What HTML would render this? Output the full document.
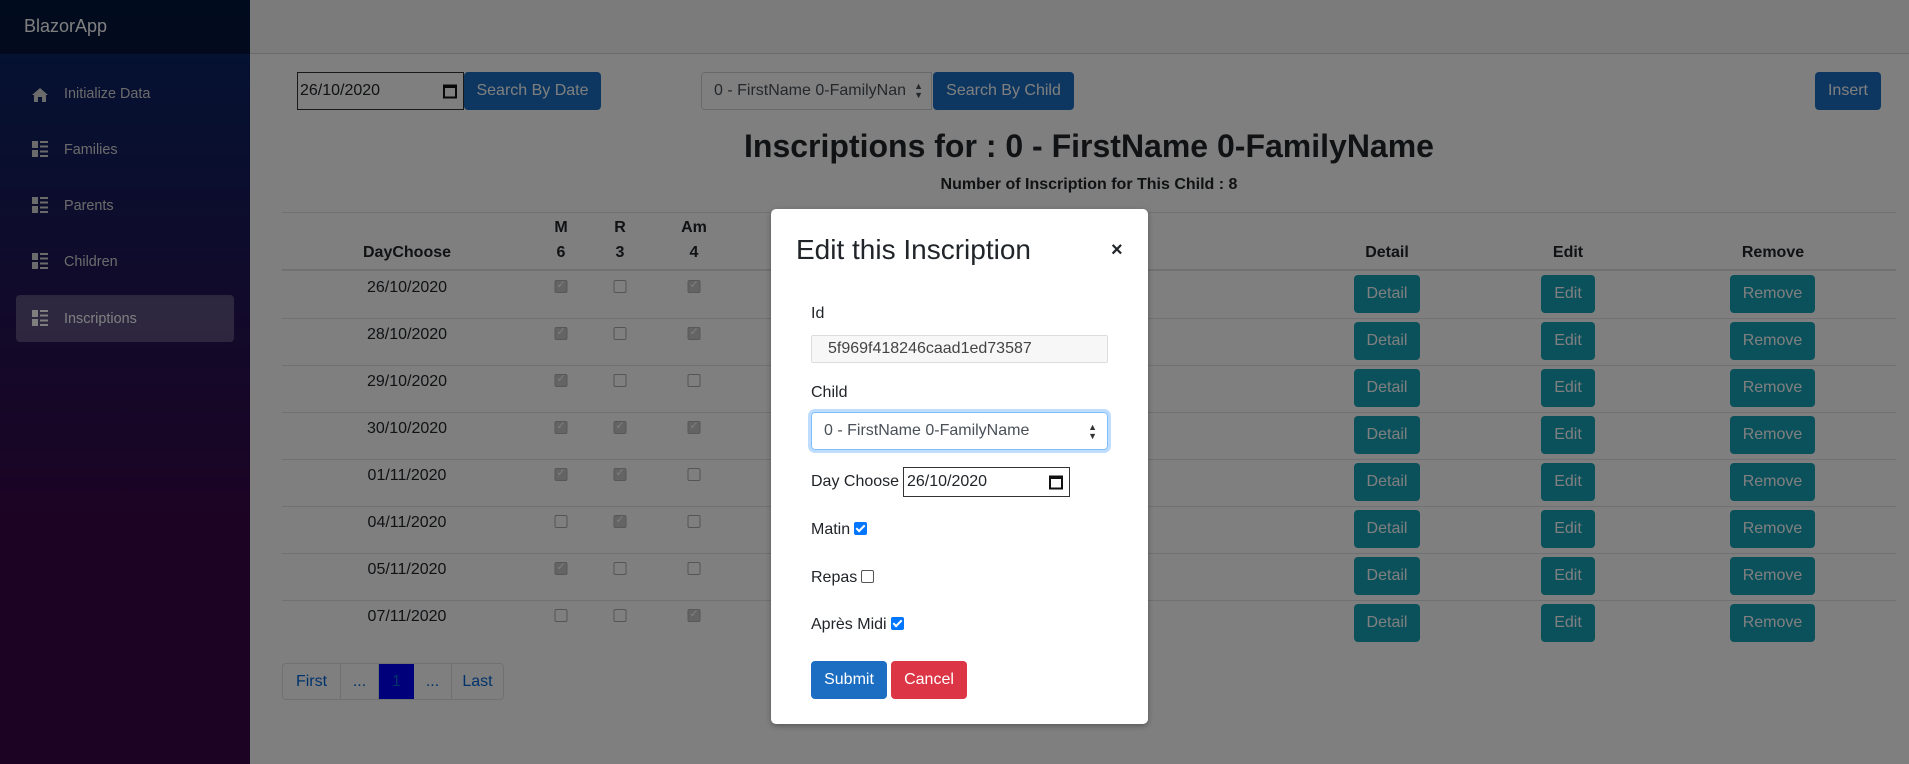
<!DOCTYPE html>
<html><head><meta charset="utf-8"><style>
*{box-sizing:border-box;margin:0;padding:0}
body{width:1909px;height:764px;overflow:hidden;position:relative;font-family:"Liberation Sans",Arial,sans-serif;font-size:16px;color:#212529;background:#fff}
.a{position:absolute}
#side{left:0;top:0;width:250px;height:764px;background:linear-gradient(180deg,rgb(5,39,103) 0%,#3a0647 70%)}
#side .hd{height:54px;background:rgba(0,0,0,.4);color:#fff;font-size:18px;padding:16px 0 0 24px}
.nav{position:absolute;left:16px;width:218px;height:47px;color:#d7d7d7;font-size:14.4px;padding:16px 0 0 48px;border-radius:4px}
.nav.act{background:rgba(255,255,255,.25);color:#fff}
.ic{position:absolute;left:16px;top:15px}
.btn{position:absolute;border-radius:4px;color:#fff;font-size:16px;text-align:center;line-height:38px;height:38px}
.bp{background:#1b6ec2}
.bi{background:#17a2b8}
.c{position:absolute;text-align:center;transform:translateX(-50%);white-space:nowrap}
.b{font-weight:bold}
.cb{position:absolute;width:13px;height:13px;border:1px solid #aaa;border-radius:2px;background:#fff;transform:translateX(-50%)}
.cb.on{background:#c8c8c8;border-color:#b0b0b0}
.cb.on:after{content:"✓";position:absolute;left:1px;top:-3px;font-size:11px;color:#fff}
.hl{position:absolute;left:282px;width:1614px;height:1px;background:#dee2e6}
#ov{left:0;top:0;width:1909px;height:764px;background:rgba(0,0,0,.5)}
#modal{left:771px;top:209px;width:377px;height:515px;background:#fff;border-radius:5px;box-shadow:0 2px 6px rgba(0,0,0,.3)}
.lbl{position:absolute;left:40px;font-size:16px;color:#212529}
.chk{display:inline-block;width:13px;height:13px;border-radius:2px;vertical-align:-1px;margin-left:4px}
.chk.on{background:#0075ff;position:relative}
.chk.on:after{content:"";position:absolute;left:4px;top:1px;width:3px;height:7px;border:solid #fff;border-width:0 2px 2px 0;transform:rotate(45deg)}
.chk.off{border:1px solid #555;background:#fff}
</style></head><body>
<div id="side" class="a">
<div class="hd">BlazorApp</div>
<div class="nav" style="top:70px"><svg class="ic" width="16" height="16" viewBox="0 0 16 16" style="top:17px"><path d="M8 1L0 8h2v7h4v-5h4v5h4V8h2z" fill="#d7d7d7"/></svg>Initialize Data</div>
<div class="nav" style="top:126px"><svg class="ic" width="16" height="16" viewBox="0 0 16 16" fill="#d7d7d7"><rect x="0" y="0" width="6" height="7"/><rect x="0" y="9" width="6" height="7"/><rect x="8" y="0" width="8" height="2"/><rect x="8" y="4.5" width="8" height="2"/><rect x="8" y="9.5" width="8" height="2"/><rect x="8" y="14" width="8" height="2"/></svg>Families</div>
<div class="nav" style="top:182px"><svg class="ic" width="16" height="16" viewBox="0 0 16 16" fill="#d7d7d7"><rect x="0" y="0" width="6" height="7"/><rect x="0" y="9" width="6" height="7"/><rect x="8" y="0" width="8" height="2"/><rect x="8" y="4.5" width="8" height="2"/><rect x="8" y="9.5" width="8" height="2"/><rect x="8" y="14" width="8" height="2"/></svg>Parents</div>
<div class="nav" style="top:238px"><svg class="ic" width="16" height="16" viewBox="0 0 16 16" fill="#d7d7d7"><rect x="0" y="0" width="6" height="7"/><rect x="0" y="9" width="6" height="7"/><rect x="8" y="0" width="8" height="2"/><rect x="8" y="4.5" width="8" height="2"/><rect x="8" y="9.5" width="8" height="2"/><rect x="8" y="14" width="8" height="2"/></svg>Children</div>
<div class="nav act" style="top:295px"><svg class="ic" width="16" height="16" viewBox="0 0 16 16" fill="#fff"><rect x="0" y="0" width="6" height="7"/><rect x="0" y="9" width="6" height="7"/><rect x="8" y="0" width="8" height="2"/><rect x="8" y="4.5" width="8" height="2"/><rect x="8" y="9.5" width="8" height="2"/><rect x="8" y="14" width="8" height="2"/></svg>Inscriptions</div>
</div>
<div class="a" style="left:250px;top:0;width:1659px;height:54px;background:#f7f7f7;border-bottom:1px solid #d6d5d5"></div>

<div class="a" style="left:297px;top:72px;width:167px;height:38px;border:1px solid #333;padding:9px 2px;font-size:16px">26/10/2020
<svg class="a" style="right:6px;top:10px" width="14" height="16" viewBox="0 0 14 16"><rect x="1" y="2.5" width="12" height="12" fill="none" stroke="#111" stroke-width="2"/><rect x="1" y="2" width="12" height="3" fill="#111"/></svg></div>
<div class="btn bp" style="left:464px;top:72px;width:137px">Search By Date</div>
<div class="a" style="left:701px;top:72px;width:231px;height:38px;border:1px solid #ced4da;border-radius:4px 0 0 4px;padding:9px 12px;color:#495057;white-space:nowrap;overflow:hidden">0 - FirstName 0-FamilyNan<span class="a" style="right:8px;top:9px;font-size:9px;line-height:9px">▲<br>▼</span></div>
<div class="btn bp" style="left:933px;top:72px;width:141px">Search By Child</div>
<div class="btn bp" style="left:1815px;top:72px;width:66px">Insert</div>

<div class="c b" style="left:1089px;top:128px;font-size:32px">Inscriptions for : 0 - FirstName 0-FamilyName</div>
<div class="c b" style="left:1089px;top:176px;font-size:16px">Number of Inscription for This Child : 8</div>

<div class="hl" style="top:212px"></div>
<div class="c b" style="left:561px;top:219px">M</div>
<div class="c b" style="left:620px;top:219px">R</div>
<div class="c b" style="left:694px;top:219px">Am</div>
<div class="c b" style="left:407px;top:244px">DayChoose</div>
<div class="c b" style="left:561px;top:244px">6</div>
<div class="c b" style="left:620px;top:244px">3</div>
<div class="c b" style="left:694px;top:244px">4</div>
<div class="c b" style="left:1387px;top:244px">Detail</div>
<div class="c b" style="left:1568px;top:244px">Edit</div>
<div class="c b" style="left:1773px;top:244px">Remove</div>
<div class="hl" style="top:269px;height:2px"></div>

<div id="rows"></div>
<script>
var d=["26/10/2020","28/10/2020","29/10/2020","30/10/2020","01/11/2020","04/11/2020","05/11/2020","07/11/2020"];
var s=[[1,0,1],[1,0,1],[1,0,0],[1,1,1],[1,1,0],[0,1,0],[1,0,0],[0,0,1]];
var h="",x=[561,620,694];
for(var i=0;i<8;i++){var t=271+i*47;
h+='<div class="c" style="left:407px;top:'+(t+8)+'px">'+d[i]+'</div>';
for(var j=0;j<3;j++)h+='<div class="cb'+(s[i][j]?' on':'')+'" style="left:'+x[j]+'px;top:'+(t+9)+'px"></div>';
h+='<div class="btn bi" style="left:1354px;top:'+(t+4)+'px;width:66px">Detail</div>';
h+='<div class="btn bi" style="left:1541px;top:'+(t+4)+'px;width:54px">Edit</div>';
h+='<div class="btn bi" style="left:1730px;top:'+(t+4)+'px;width:85px">Remove</div>';
if(i<7)h+='<div class="hl" style="top:'+(t+47)+'px"></div>';}
document.getElementById("rows").innerHTML=h;
</script>

<div class="a" style="left:282px;top:663px;height:37px;width:222px;border:1px solid #dee2e6;border-radius:4px;color:#0366d6;font-size:16px;line-height:35px;display:flex">
<div style="width:58px;text-align:center;border-right:1px solid #dee2e6">First</div>
<div style="width:38px;text-align:center;border-right:1px solid #dee2e6">...</div>
<div style="width:35px;text-align:center;background:#0000f6">1</div>
<div style="width:38px;text-align:center;border-right:1px solid #dee2e6">...</div>
<div style="flex:1;text-align:center">Last</div>
</div>

<div id="ov" class="a"></div>
<div id="modal" class="a">
<div class="a" style="left:25px;top:25px;font-size:28px">Edit this Inscription</div>
<div class="a b" style="left:340px;top:30px;font-size:20px">×</div>
<div class="lbl" style="top:96px">Id</div>
<div class="a" style="left:40px;top:126px;width:297px;height:28px;background:#f7f7f7;border:1px solid #ddd;border-radius:2px;padding:4px 16px;color:#444">5f969f418246caad1ed73587</div>
<div class="lbl" style="top:175px">Child</div>
<div class="a" style="left:40px;top:203px;width:297px;height:38px;border:1px solid #80bdff;border-radius:4px;box-shadow:0 0 0 3px rgba(0,123,255,.25);padding:9px 12px;color:#495057">0 - FirstName 0-FamilyName<span class="a" style="right:10px;top:10px;font-size:9px;line-height:9px;color:#333">▲<br>▼</span></div>
<div class="lbl" style="top:264px">Day Choose</div>
<div class="a" style="left:132px;top:258px;width:167px;height:30px;border:1px solid #333;padding:5px 3px">26/10/2020
<svg class="a" style="right:6px;top:6px" width="14" height="16" viewBox="0 0 14 16"><rect x="1" y="2.5" width="12" height="12" fill="none" stroke="#111" stroke-width="2"/><rect x="1" y="2" width="12" height="3" fill="#111"/></svg></div>
<div class="lbl" style="top:312px">Matin<span class="chk on"></span></div>
<div class="lbl" style="top:360px">Repas<span class="chk off"></span></div>
<div class="lbl" style="top:407px">Après Midi<span class="chk on"></span></div>
<div class="btn bp" style="left:40px;top:452px;width:76px">Submit</div>
<div class="btn" style="left:120px;top:452px;width:76px;background:#dc3545">Cancel</div>
</div>
</body></html>
